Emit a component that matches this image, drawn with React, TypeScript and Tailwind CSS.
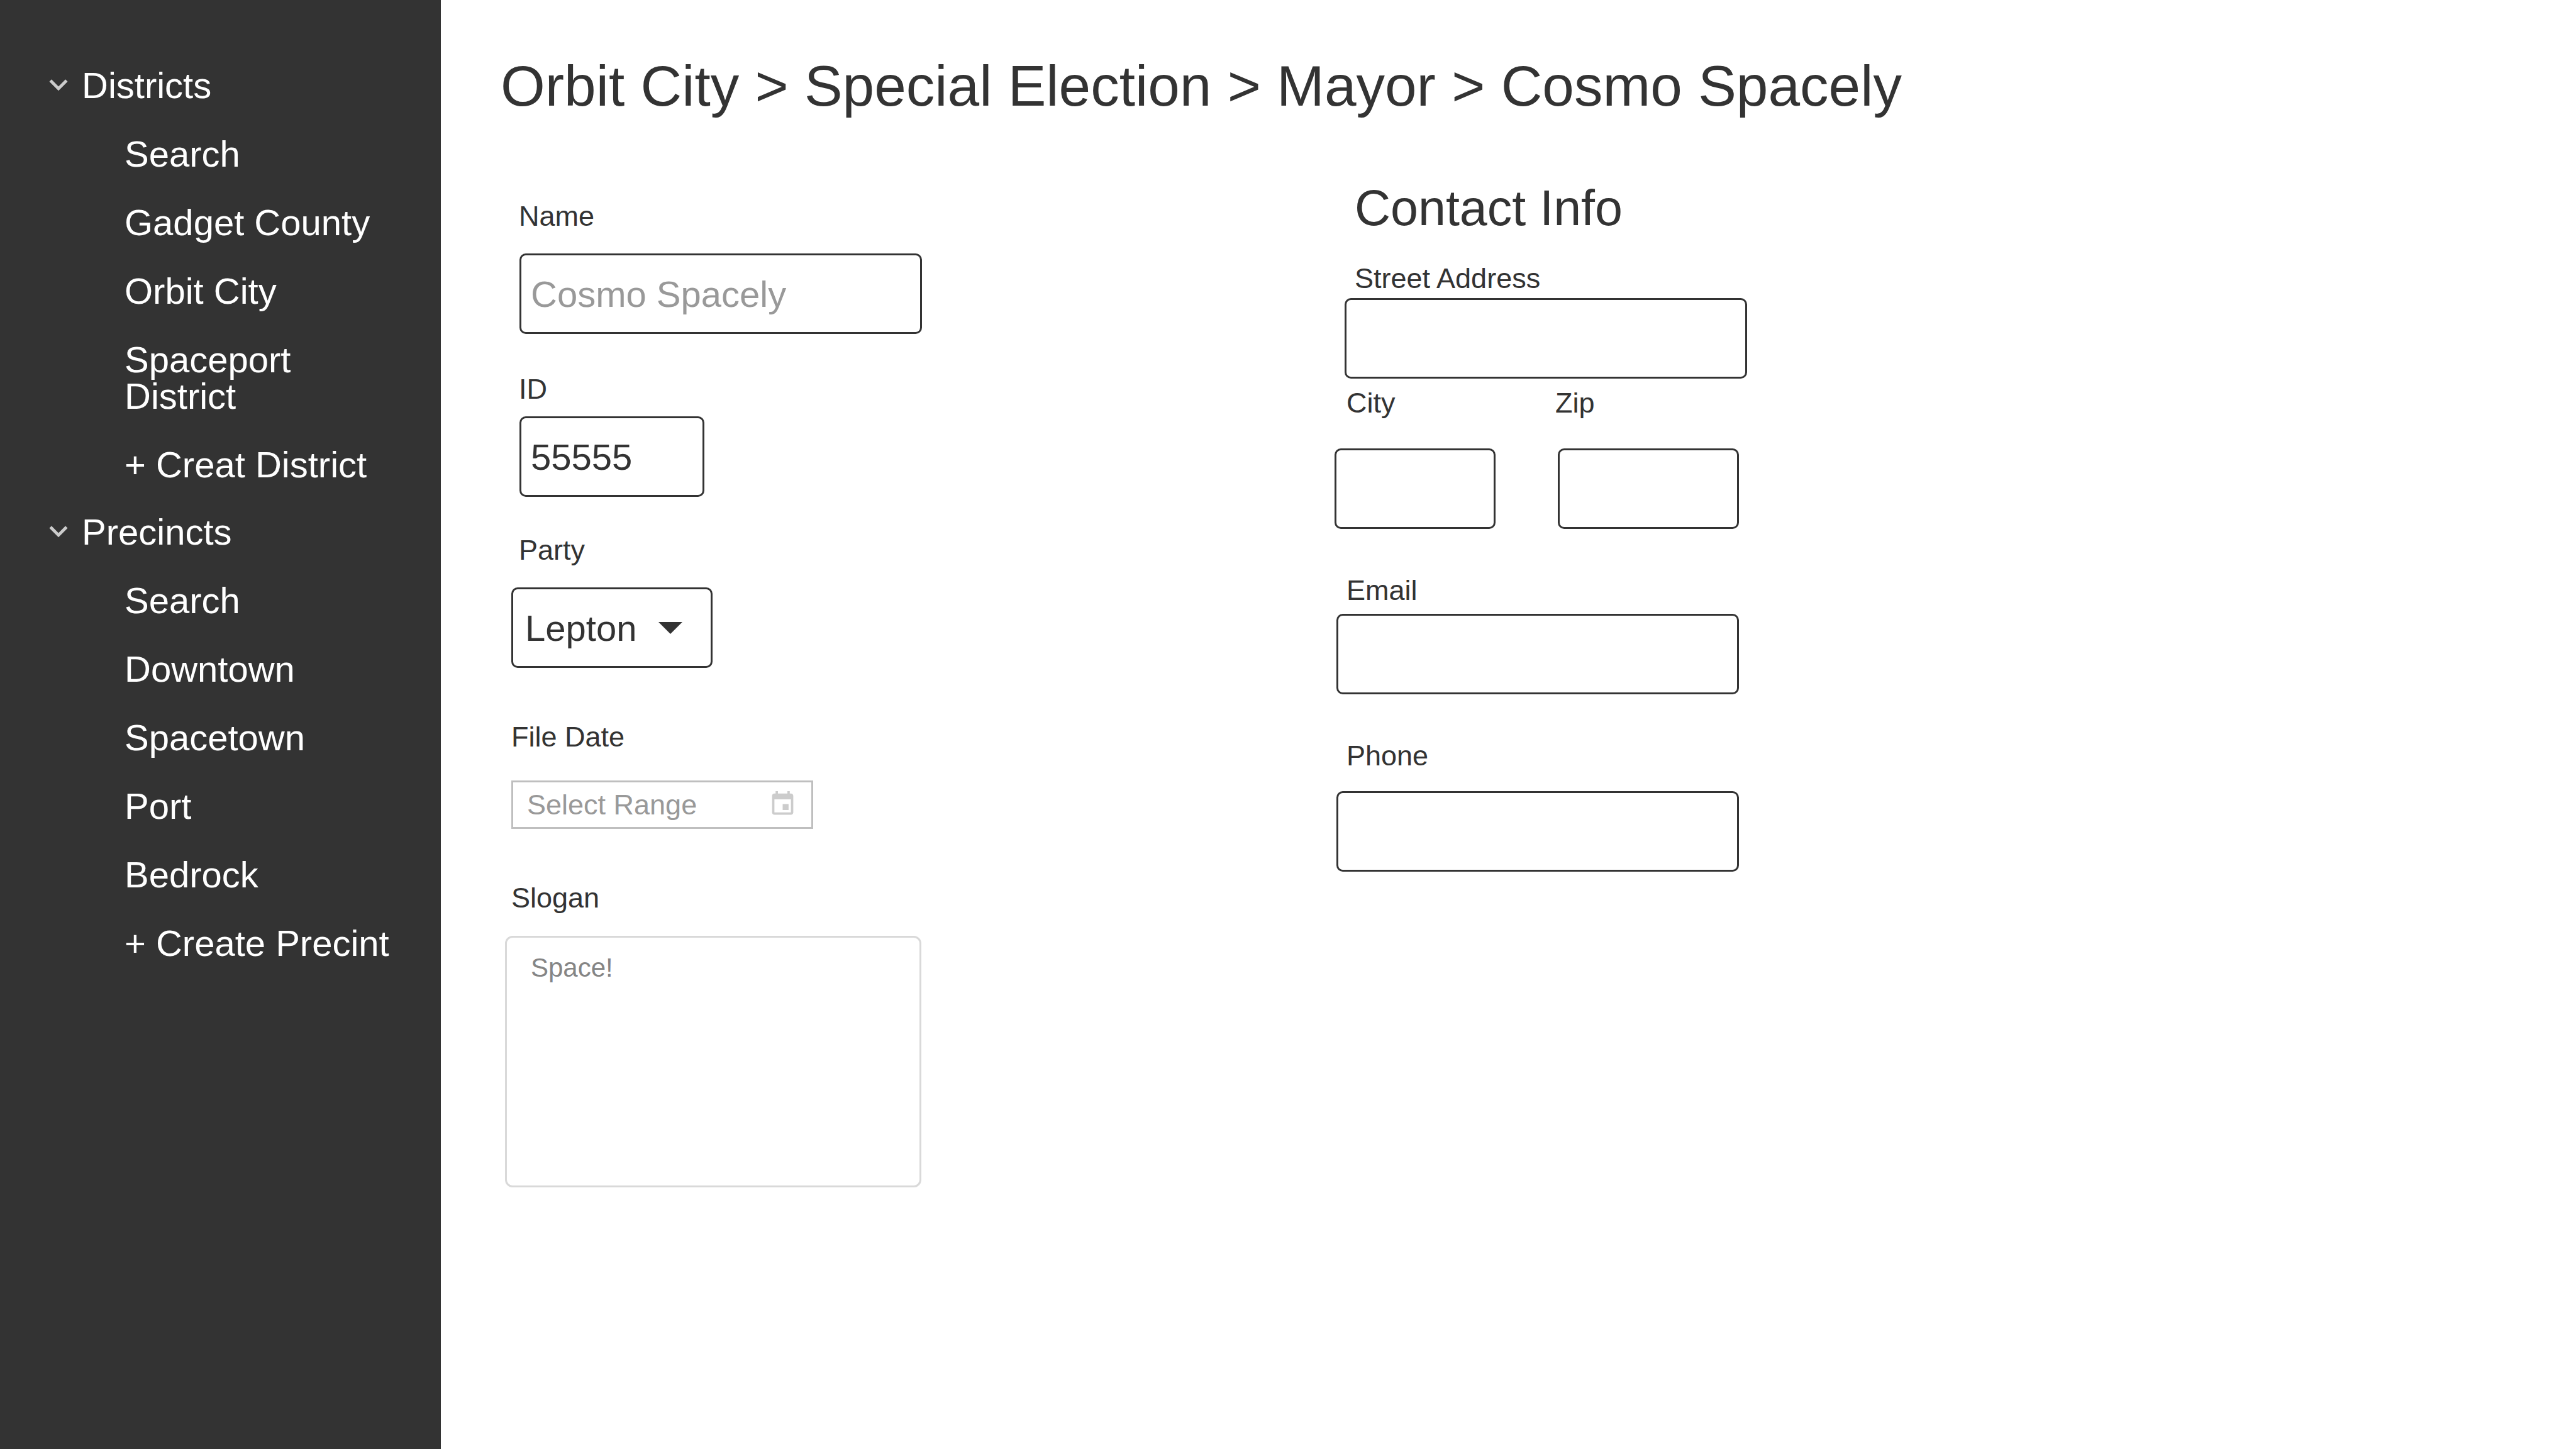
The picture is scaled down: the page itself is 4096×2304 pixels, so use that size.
import { useState } from "react";
import type { ReactNode } from "react";

type Group = { title: string; items: string[] };

const groups: Group[] = [
  {
    title: "Districts",
    items: ["Search", "Gadget County", "Orbit City", "Spaceport District", "+ Creat District"],
  },
  {
    title: "Precincts",
    items: ["Search", "Downtown", "Spacetown", "Port", "Bedrock", "+ Create Precint"],
  },
];

const box =
  "block h-[128px] max-w-full rounded-[10px] border-[3px] border-[#333] bg-white pl-[15px] text-[58px] text-[#333] placeholder:text-[#999] placeholder:opacity-100";

function NavGroup({ group }: { group: Group }) {
  const [open, setOpen] = useState(true);
  return (
    <section className="flex flex-col gap-[51px]">
      <button
        type="button"
        aria-expanded={open}
        onClick={() => setOpen(!open)}
        className="flex items-center gap-2 text-left"
      >
        <svg viewBox="0 0.6 24 24" className="size-[58px] fill-[#ccc]" aria-hidden="true">
          <path d="M16.59 8.59 12 13.17 7.41 8.59 6 10l6 6 6-6z" />
        </svg>
        {group.title}
      </button>
      {open && (
        <ul className="flex flex-col gap-[51px] pl-[134px]">
          {group.items.map((item) => (
            <li key={item}>
              <a href="#" className="block">
                {item}
              </a>
            </li>
          ))}
        </ul>
      )}
    </section>
  );
}

function Label({ id, className = "", children }: { id: string; className?: string; children: ReactNode }) {
  return (
    <label htmlFor={id} className={`block text-[45px] leading-[50px] ${className}`}>
      {children}
    </label>
  );
}

export default function App() {
  return (
    <div className="flex min-h-screen bg-white font-['Liberation_Sans',Arial,sans-serif] text-[#333]">
      <nav className="flex w-[701px] shrink-0 flex-col gap-[49px] bg-[#333] pt-[107px] pr-16 pl-16 text-[58px] leading-[58px] text-white">
        {groups.map((group) => (
          <NavGroup key={group.title} group={group} />
        ))}
      </nav>

      <main className="min-w-0 flex-1 pt-[91px] pl-[95px]">
        <h1 className="text-[91px] leading-[91px]">
          Orbit City &gt; Special Election &gt; Mayor &gt; Cosmo Spacely
        </h1>

        <form className="grid grid-cols-[2fr_3fr] items-start">
          <div className="pt-[137px]">
            <Label id="name" className="ml-[29px]">Name</Label>
            <input id="name" type="text" placeholder="Cosmo Spacely" className={`${box} mt-[34px] ml-[30px] w-[640px]`} />

            <Label id="candidate-id" className="mt-[63px] ml-[29px]">ID</Label>
            <input id="candidate-id" type="text" defaultValue="55555" className={`${box} mt-[18px] ml-[30px] w-[294px]`} />

            <Label id="party" className="mt-[60px] ml-[29px]">Party</Label>
            <div className="relative mt-[34px] ml-[17px] w-[320px]">
              <select
                id="party"
                className="block h-[128px] w-full appearance-none rounded-[10px] border-[3px] border-[#333] bg-white pl-[19px] text-[58px] text-[#333]"
              >
                <option>Lepton</option>
              </select>
              <svg
                viewBox="0 0 38 19"
                className="pointer-events-none absolute top-[55px] right-[48px] h-[19px] w-[38px] fill-[#333]"
                aria-hidden="true"
              >
                <path d="M0 0h38L19 19z" />
              </svg>
            </div>

            <Label id="file-date" className="mt-[85px] ml-[17px]">File Date</Label>
            <div className="mt-[44px] ml-[17px] flex h-[77px] w-[480px] items-center border-[3px] border-[#bfbfbf] pr-[23px] pl-[22px]">
              <input
                id="file-date"
                type="text"
                placeholder="Select Range"
                className="min-w-0 flex-1 bg-transparent text-[45px] leading-[50px] placeholder:text-[#999] placeholder:opacity-100"
              />
              <button type="button" aria-label="Open calendar" className="shrink-0">
                <svg viewBox="0 0.5 24 24" className="size-[45px] fill-[#ccc]" aria-hidden="true">
                  <path d="M17 12h-5v5h5v-5zM16 1v2H8V1H6v2H5c-1.11 0-1.99.9-1.99 2L3 19c0 1.1.89 2 2 2h14c1.1 0 2-.9 2-2V5c0-1.1-.9-2-2-2h-1V1h-2zm3 18H5V8h14v11z" />
                </svg>
              </button>
            </div>

            <Label id="slogan" className="mt-[85px] ml-[17px]">Slogan</Label>
            <textarea
              id="slogan"
              defaultValue="Space!"
              className="mt-[35px] ml-[7px] block h-[400px] w-[662px] max-w-full resize-none rounded-[12px] border-[3px] border-[#d9d9d9] bg-white pt-[24px] pr-[38px] pl-[38px] text-[42px] leading-[48px] text-[#858585]"
            />
          </div>

          <div className="pt-[109px]">
            <h2 className="ml-[38px] text-[79px] leading-[80px]">Contact Info</h2>

            <Label id="street" className="mt-[47px] ml-[38px]">Street Address</Label>
            <input id="street" type="text" className={`${box} mt-[6px] ml-[22px] w-[640px]`} />

            <div className="mt-[14px] flex">
              <div className="w-[357px]">
                <Label id="city" className="ml-[25px]">City</Label>
                <input id="city" type="text" className={`${box} mt-[47px] ml-[6px] w-[256px]`} />
              </div>
              <div>
                <Label id="zip">Zip</Label>
                <input id="zip" type="text" className={`${box} mt-[47px] ml-1 w-[288px]`} />
              </div>
            </div>

            <Label id="email" className="mt-[73px] ml-[25px]">Email</Label>
            <input id="email" type="email" className={`${box} mt-[12px] ml-[9px] w-[640px]`} />

            <Label id="phone" className="mt-[73px] ml-[25px]">Phone</Label>
            <input id="phone" type="tel" className={`${box} mt-[31px] ml-[9px] w-[640px]`} />
          </div>
        </form>
      </main>
    </div>
  );
}
